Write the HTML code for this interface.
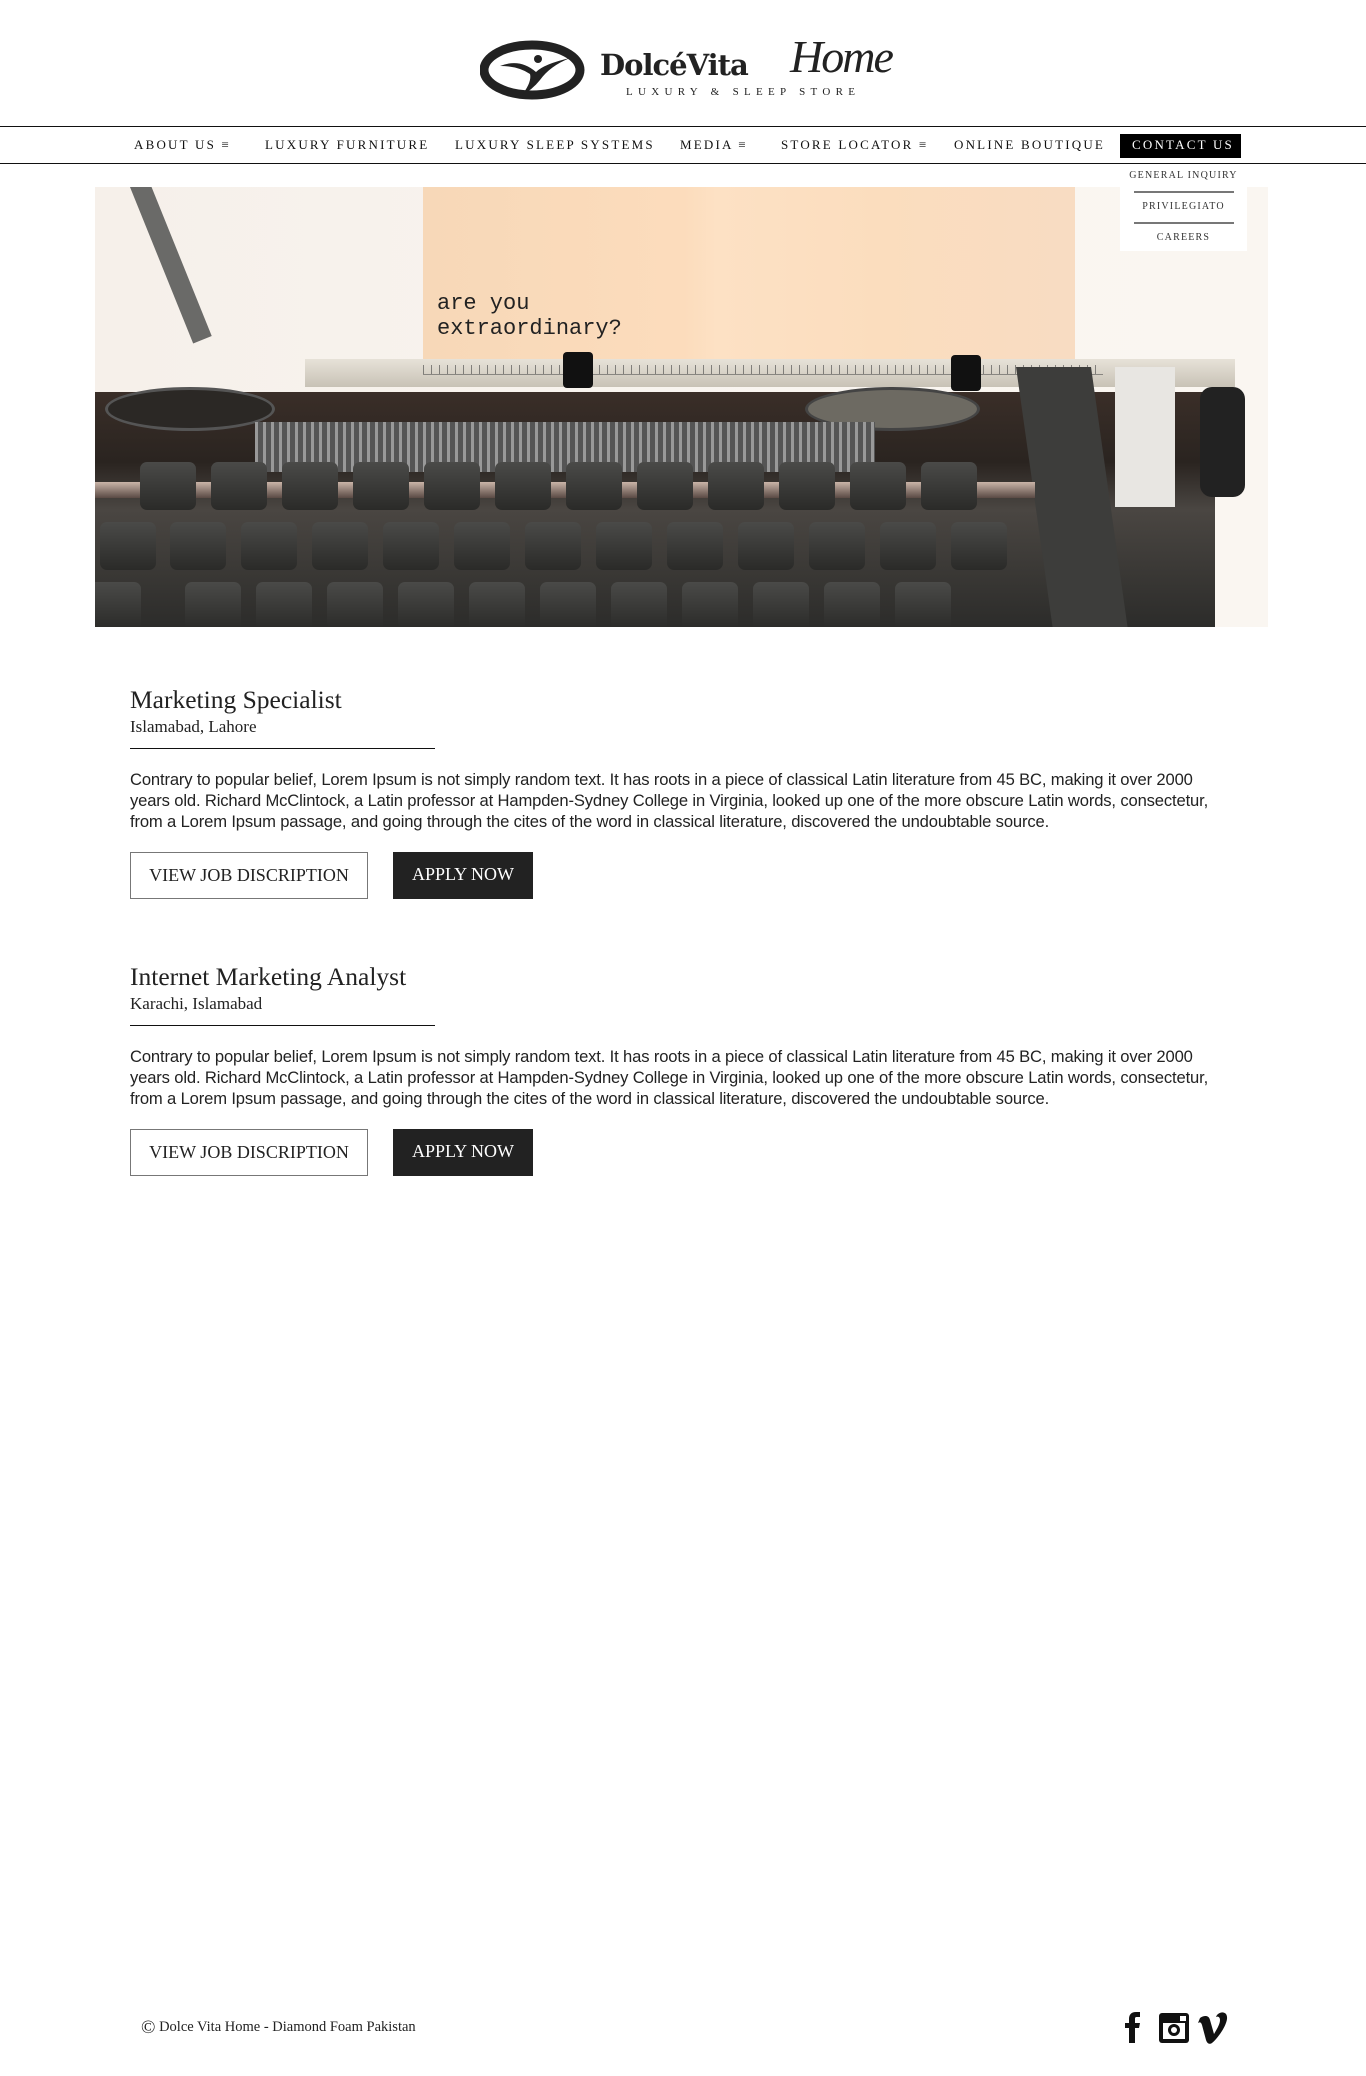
<!DOCTYPE html>
<html><head><meta charset="utf-8">
<style>
*{margin:0;padding:0;box-sizing:border-box}
body{width:1366px;height:2076px;background:#fff;position:relative;font-family:"Liberation Serif",serif;color:#222;overflow:hidden}
.abs{position:absolute}
.nav{position:absolute;left:0;width:1366px;top:126px;height:38px;border-top:1.5px solid #111;border-bottom:1.5px solid #111}
.nav span{position:absolute;top:10px;font-size:13px;letter-spacing:2.2px;color:#111;white-space:nowrap}
.dd{position:absolute;left:1120px;top:164px;width:127px;height:87px;background:#fff;font-size:10px;letter-spacing:1.2px;text-align:center;color:#333}
.dd div{position:absolute;left:0;width:127px}
.dd hr{position:absolute;left:14px;width:100px;border:0;border-top:2px solid #777}
.job h2{position:absolute;left:130px;font-weight:normal;font-size:25.5px;color:#222}
.job .loc{position:absolute;left:130px;font-size:17px}
.job .ln{position:absolute;left:130px;width:305px;border-top:1.5px solid #111}
.job p{position:absolute;left:130px;width:1104px;font-family:"Liberation Sans",sans-serif;font-size:16.6px;line-height:21px;color:#222;letter-spacing:-0.15px}
.b1,.b2{position:absolute;height:47px;font-size:18px;line-height:45px;text-align:center}
.b1{left:130px;width:238px;border:1px solid #777;color:#222}
.b2{left:393px;width:140px;background:#222;color:#fff}
.key{position:absolute;width:56px;height:48px;background:linear-gradient(#4a4a48,#2a2a28);border-radius:7px}
</style></head><body>

<svg class="abs" style="left:480px;top:40px" width="110" height="60" viewBox="0 0 110 60">
<ellipse cx="52" cy="30" rx="48" ry="25" fill="none" stroke="#222" stroke-width="9"/>
<path d="M20 26 Q40 18 56 32 Q64 24 90 18 Q70 26 60 40 Q52 50 42 55 Q52 42 50 34 Q38 26 20 26Z" fill="#222"/>
<circle cx="58" cy="19" r="4" fill="#222"/>
</svg>
<div class="abs" style="left:600px;top:48px;font-size:29px;font-weight:bold;color:#222;letter-spacing:-1px;font-family:'DejaVu Serif',serif">DolcéVita</div>
<div class="abs" style="left:790px;top:30px;font-size:46px;font-style:italic;color:#222;font-family:'Liberation Serif',serif;letter-spacing:-2px">Home</div>
<div class="abs" style="left:626px;top:86px;font-size:11px;letter-spacing:5.3px;color:#222">LUXURY &amp; SLEEP STORE</div>

<div class="nav">
<span style="left:134px">ABOUT US ≡</span>
<span style="left:265px">LUXURY FURNITURE</span>
<span style="left:455px">LUXURY SLEEP SYSTEMS</span>
<span style="left:680px">MEDIA ≡</span>
<span style="left:781px">STORE LOCATOR ≡</span>
<span style="left:954px">ONLINE BOUTIQUE</span>
<div style="position:absolute;left:1120px;top:7px;width:121px;height:24px;background:#000"></div>
<span style="left:1132px;color:#fff;top:10px">CONTACT US</span>
</div>

<div class="abs" style="left:95px;top:187px;width:1173px;height:440px;overflow:hidden;background:linear-gradient(90deg,#f6f0ea,#f9f5f0 60%,#faf6f1)">
 <div class="abs" style="left:328px;top:0;width:652px;height:200px;background:linear-gradient(90deg,#f7d8b8,#fcdcbc 40%,#fde1c4 45%,#fbddbe 70%,#f8dcc2)"></div>
 <div class="abs" style="left:342px;top:104px;font-family:'Liberation Mono',monospace;font-size:22px;line-height:25px;color:#222">are you<br>extraordinary?</div>
 <div class="abs" style="left:210px;top:172px;width:930px;height:28px;background:linear-gradient(#e7e2d8,#c8c2b6)"></div>
 <div class="abs" style="left:328px;top:178px;width:680px;height:10px;border-bottom:1px solid #555;background:repeating-linear-gradient(90deg,#444 0 1px,transparent 1px 8px);opacity:.6"></div>
 <div class="abs" style="left:468px;top:165px;width:30px;height:36px;background:#111;border-radius:4px"></div>
 <div class="abs" style="left:856px;top:168px;width:30px;height:36px;background:#111;border-radius:4px"></div>
 <div class="abs" style="left:60px;top:-40px;width:20px;height:200px;background:#6a6a68;transform:rotate(-22deg)"></div>
 <div class="abs" style="left:0;top:205px;width:1120px;height:235px;background:linear-gradient(#3a2e28,#2a2420 30%,#4a4642 50%,#2c2c2a)"></div>
 <div class="abs" style="left:10px;top:200px;width:170px;height:44px;border-radius:50%;background:#2b2825;border:3px solid #555"></div>
 <div class="abs" style="left:710px;top:200px;width:175px;height:44px;border-radius:50%;background:#6d6a62;border:3px solid #444"></div>
 <div class="abs" style="left:160px;top:235px;width:620px;height:50px;background:repeating-linear-gradient(90deg,#999 0 3px,#555 3px 8px)"></div>
 <div class="abs" style="left:1020px;top:180px;width:60px;height:140px;background:#e8e6e2"></div>
 <div class="abs" style="left:1105px;top:200px;width:45px;height:110px;background:#222;border-radius:12px"></div>
 <div class="abs" style="left:940px;top:180px;width:75px;height:270px;background:#3d3d3b;transform:skewX(8deg)"></div>
 <div class="abs" style="left:0;top:295px;width:940px;height:16px;background:linear-gradient(#c9b4a8,#5a4a44)"></div>
</div>
<div class="abs" style="left:95px;top:187px;width:1173px;height:440px;overflow:hidden">
 <div class="key" style="left:45px;top:275px"></div><div class="key" style="left:116px;top:275px"></div><div class="key" style="left:187px;top:275px"></div><div class="key" style="left:258px;top:275px"></div><div class="key" style="left:329px;top:275px"></div><div class="key" style="left:400px;top:275px"></div><div class="key" style="left:471px;top:275px"></div><div class="key" style="left:542px;top:275px"></div><div class="key" style="left:613px;top:275px"></div><div class="key" style="left:684px;top:275px"></div><div class="key" style="left:755px;top:275px"></div><div class="key" style="left:826px;top:275px"></div>
 <div class="key" style="left:5px;top:335px"></div><div class="key" style="left:75px;top:335px"></div><div class="key" style="left:146px;top:335px"></div><div class="key" style="left:217px;top:335px"></div><div class="key" style="left:288px;top:335px"></div><div class="key" style="left:359px;top:335px"></div><div class="key" style="left:430px;top:335px"></div><div class="key" style="left:501px;top:335px"></div><div class="key" style="left:572px;top:335px"></div><div class="key" style="left:643px;top:335px"></div><div class="key" style="left:714px;top:335px"></div><div class="key" style="left:785px;top:335px"></div><div class="key" style="left:856px;top:335px"></div>
 <div class="key" style="left:-10px;top:395px"></div><div class="key" style="left:90px;top:395px"></div><div class="key" style="left:161px;top:395px"></div><div class="key" style="left:232px;top:395px"></div><div class="key" style="left:303px;top:395px"></div><div class="key" style="left:374px;top:395px"></div><div class="key" style="left:445px;top:395px"></div><div class="key" style="left:516px;top:395px"></div><div class="key" style="left:587px;top:395px"></div><div class="key" style="left:658px;top:395px"></div><div class="key" style="left:729px;top:395px"></div><div class="key" style="left:800px;top:395px"></div>
</div>

<div class="dd">
 <div style="top:6px">GENERAL INQUIRY</div>
 <hr style="top:27px">
 <div style="top:37px">PRIVILEGIATO</div>
 <hr style="top:58px">
 <div style="top:68px">CAREERS</div>
</div>

<div class="job">
 <h2 style="top:685px">Marketing Specialist</h2>
 <div class="loc" style="top:717px">Islamabad, Lahore</div>
 <div class="ln" style="top:748px"></div>
 <p style="top:769px">Contrary to popular belief, Lorem Ipsum is not simply random text. It has roots in a piece of classical Latin literature from 45 BC, making it over 2000 years old. Richard McClintock, a Latin professor at Hampden-Sydney College in Virginia, looked up one of the more obscure Latin words, consectetur, from a Lorem Ipsum passage, and going through the cites of the word in classical literature, discovered the undoubtable source.</p>
 <div class="b1" style="top:852px">VIEW JOB DISCRIPTION</div>
 <div class="b2" style="top:852px">APPLY NOW</div>

 <h2 style="top:962px">Internet Marketing Analyst</h2>
 <div class="loc" style="top:994px">Karachi, Islamabad</div>
 <div class="ln" style="top:1025px"></div>
 <p style="top:1046px">Contrary to popular belief, Lorem Ipsum is not simply random text. It has roots in a piece of classical Latin literature from 45 BC, making it over 2000 years old. Richard McClintock, a Latin professor at Hampden-Sydney College in Virginia, looked up one of the more obscure Latin words, consectetur, from a Lorem Ipsum passage, and going through the cites of the word in classical literature, discovered the undoubtable source.</p>
 <div class="b1" style="top:1129px">VIEW JOB DISCRIPTION</div>
 <div class="b2" style="top:1129px">APPLY NOW</div>
</div>

<div class="abs" style="left:141px;top:2017px;font-size:14.5px;color:#222"><span style="font-size:19px;vertical-align:-2px">©</span> Dolce Vita Home - Diamond Foam Pakistan</div>
<svg class="abs" style="left:1120px;top:2010px" width="120" height="34" viewBox="0 0 120 34">
 <path d="M9 33V18H5v-5h4V9c0-4 2-7 7-7h4v5h-3c-2 0-2 1-2 2v4h5l-1 5h-4v15z" fill="#111"/>
 <rect x="39" y="3" width="30" height="30" rx="3" fill="#111"/>
 <rect x="43" y="13" width="22" height="16" fill="#fff"/>
 <circle cx="54" cy="20" r="6" fill="#111"/><circle cx="54" cy="20" r="3" fill="#fff"/>
 <rect x="60" y="6" width="6" height="5" fill="#fff"/>
 <path d="M80 8c4-3 9-3 10 2l4 14c3-5 6-10 6-14 0-3-2-4-4-3 2-6 12-7 11 2-1 8-10 20-15 24-3 2-5 0-6-3l-4-15c-1-3-2-3-4-2z" fill="#111"/>
</svg>
</body></html>
